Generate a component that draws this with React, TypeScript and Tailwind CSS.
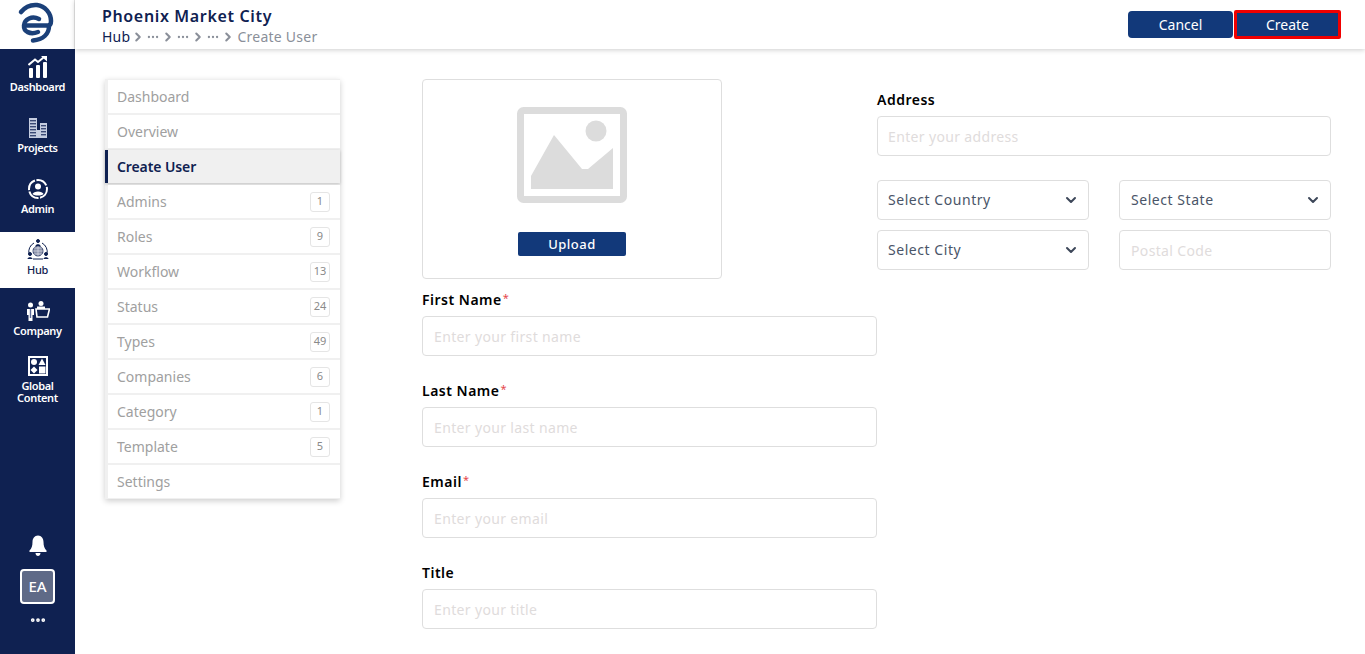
import { ChevronDown, ChevronRight, Ellipsis } from "lucide-react";

const font = "font-['Noto_Sans',sans-serif]";

const menuItems = [
  { label: "Dashboard" },
  { label: "Overview" },
  { label: "Create User", active: true },
  { label: "Admins", count: 1 },
  { label: "Roles", count: 9 },
  { label: "Workflow", count: 13 },
  { label: "Status", count: 24 },
  { label: "Types", count: 49 },
  { label: "Companies", count: 6 },
  { label: "Category", count: 1 },
  { label: "Template", count: 5 },
  { label: "Settings" },
];

function Logo() {
  return (
    <svg width="50" height="48" viewBox="0 0 50 48" fill="none" stroke="#1b4079" strokeWidth="4.5" strokeLinecap="round">
      <path d="M9 11 C13 6 19 3.5 25 4 C33 5 39 12 39 20 C39 23 38 24.5 36 24.5 L14 24.5" />
      <path d="M27 18 C20 14.5 12.5 18 12 24.5 C11.5 30.5 18 34 26 31" />
      <path d="M37 25 C37 33 31 38.5 21 39.5" />
    </svg>
  );
}

function DashboardIcon() {
  return (
    <svg width="20" height="22" viewBox="0 0 20 22" fill="white">
      <rect x="1" y="12" width="4" height="10" rx="1" />
      <rect x="8" y="9" width="4" height="13" rx="1" />
      <rect x="15" y="6" width="4" height="16" rx="1" />
      <path d="M0.5 9 L7 3.5 L10 6 L15.5 1.5" fill="none" stroke="white" strokeWidth="2" />
      <path d="M13 0 H19 V5.5 Z" />
    </svg>
  );
}

function ProjectsIcon() {
  return (
    <svg width="18" height="20" viewBox="0 0 18 20">
      <rect x="0" y="0" width="8" height="20" fill="#c5cde0" />
      <rect x="11" y="5" width="7" height="15" fill="#c5cde0" />
      <rect x="8" y="12" width="3" height="8" fill="#c5cde0" />
      {[2, 5, 8, 11, 14, 17].map((y) => (
        <rect key={y} x="1" y={y} width="6" height="1.4" fill="#3b4a75" />
      ))}
      {[7, 10, 13, 16].map((y) => (
        <rect key={y} x="12" y={y} width="5" height="1.4" fill="#3b4a75" />
      ))}
    </svg>
  );
}

function AdminIcon() {
  return (
    <svg width="22" height="22" viewBox="0 0 22 22" fill="none">
      <circle cx="11" cy="11" r="9" stroke="white" strokeWidth="2" strokeDasharray="12 1.5" />
      <circle cx="11" cy="8.5" r="3" fill="white" />
      <path d="M5.5 16 C6.5 12.5 15.5 12.5 16.5 16 C14 18 8 18 5.5 16 Z" fill="white" />
    </svg>
  );
}

function HubIcon() {
  return (
    <svg width="24" height="22" viewBox="0 0 24 22" fill="none" stroke="#0f2151">
      <circle cx="12" cy="12" r="5" fill="#8d94ab" strokeWidth="0.8" />
      <path d="M7 12 H17 M12 7 V17 M8 9 H16 M8 15 H16" strokeWidth="0.6" stroke="#e8e8f0" />
      <path d="M3 15 A10 10 0 0 1 8 4 M21 15 A10 10 0 0 0 16 4 M7 20 H17" strokeWidth="1" />
      <circle cx="12" cy="2" r="1.5" fill="#0f2151" />
      <path d="M9.5 7 C9.5 4.5 14.5 4.5 14.5 7 Z" fill="#0f2151" stroke="none" />
      <circle cx="4" cy="15" r="1.5" fill="#0f2151" />
      <path d="M1.5 20 C1.5 17.5 6.5 17.5 6.5 20 Z" fill="#0f2151" stroke="none" />
      <circle cx="20" cy="15" r="1.5" fill="#0f2151" />
      <path d="M17.5 20 C17.5 17.5 22.5 17.5 22.5 20 Z" fill="#0f2151" stroke="none" />
    </svg>
  );
}

function CompanyIcon() {
  return (
    <svg width="24" height="20" viewBox="0 0 24 20" fill="none">
      <circle cx="4.5" cy="4" r="2.5" fill="white" />
      <path d="M1 8 H8 V14 H6.5 V20 H2.5 V14 H1 Z" fill="white" />
      <path d="M4.5 8 V17" stroke="#5a6a9a" strokeWidth="1.4" />
      <circle cx="15" cy="2.5" r="2.5" fill="white" />
      <path d="M11 5.5 H19 V8 H11 Z" fill="white" />
      <path d="M10 8 H23.5 L21.5 16 H11 Z" stroke="white" strokeWidth="1.6" />
    </svg>
  );
}

function GlobalContentIcon() {
  return (
    <svg width="20" height="20" viewBox="0 0 20 20">
      <rect x="0" y="0" width="20" height="20" fill="white" />
      <rect x="2" y="2" width="16" height="16" fill="#0f2151" />
      <circle cx="6" cy="6" r="3" fill="white" />
      <path d="M6 10.5 L9.5 14 L6 17.5 L2.5 14 Z" fill="white" />
      <path d="M14 2.5 L17.5 9 H10.5 Z" fill="white" />
      <rect x="11" y="10.5" width="6.5" height="7" fill="white" />
    </svg>
  );
}

function BellIcon() {
  return (
    <svg width="18" height="21" viewBox="0 0 18 21" fill="white">
      <path d="M9 0.5 C12.5 0.5 14.5 3.5 14.5 7 C14.5 11 15.5 13.5 17.5 15.5 V17 H0.5 V15.5 C2.5 13.5 3.5 11 3.5 7 C3.5 3.5 5.5 0.5 9 0.5 Z" />
      <path d="M6.5 18 H11.5 C11.5 20 10.2 21 9 21 C7.8 21 6.5 20 6.5 18 Z" />
    </svg>
  );
}

function PlaceholderImage() {
  return (
    <svg width="110" height="96" viewBox="0 0 110 96">
      <rect x="3.5" y="3.5" width="103" height="89" rx="3" fill="none" stroke="#dcdcdc" strokeWidth="7" />
      <circle cx="79" cy="24" r="10.5" fill="#dcdcdc" />
      <path d="M14 69 L37 28 L65 62 L71 62 L96 41 V82 H14 Z" fill="#dcdcdc" />
    </svg>
  );
}

function NavItem({ label, icon, active }: { label: string; icon: React.ReactNode; active?: boolean }) {
  return (
    <div className={`h-[56px] mb-[5px] flex flex-col items-center justify-center pb-[5px] ${active ? "bg-white text-[#0f2151] font-medium" : "text-white font-semibold"}`}>
      <div className="h-[22px] flex items-center justify-center mb-[3px]">{icon}</div>
      <span className="text-[11px] leading-[12px] tracking-[-0.35px] text-center">{label}</span>
    </div>
  );
}

function Field({ label, placeholder, required }: { label: string; placeholder: string; required?: boolean }) {
  return (
    <div className="mb-[25px]">
      <div className="h-[26px] text-[14px] leading-[20px] font-semibold tracking-[0.5px] text-black">
        {label}
        {required && <span className="ml-[1px] text-[11px] leading-[0] font-normal align-[3px] text-[#e5484d]">*</span>}
      </div>
      <TextInput placeholder={placeholder} />
    </div>
  );
}

function TextInput({ placeholder, tight }: { placeholder: string; tight?: boolean }) {
  return (
    <input
      placeholder={placeholder}
      className={`w-full h-[40px] border border-[#dedede] rounded-[4px] bg-white text-[14px] tracking-[0.35px] outline-none placeholder:text-[#dfdcdc] ${tight ? "px-[10px]" : "px-[11px]"}`}
    />
  );
}

function SelectBox({ label, tight }: { label: string; tight?: boolean }) {
  return (
    <div className={`h-[40px] pr-[9px] flex items-center justify-between border border-[#dedede] rounded-[4px] text-[14px] tracking-[0.55px] text-[#4a5568] ${tight ? "pl-[10px]" : "pl-[11px]"}`}>
      <span className="pb-[2px]">{label}</span>
      <ChevronDown size={16} strokeWidth={3} className="text-[#3d4759]" />
    </div>
  );
}

export default function App() {
  return (
    <div className={`${font} h-screen flex overflow-hidden bg-white`}>
      <aside className="w-[75px] shrink-0 flex flex-col bg-[#0f2151]">
        <div className="h-[49px] flex items-center justify-center bg-white border-r border-[#e5e5e5]">
          <Logo />
        </div>
        <nav className="flex-1">
          <NavItem label="Dashboard" icon={<DashboardIcon />} />
          <NavItem label="Projects" icon={<ProjectsIcon />} />
          <NavItem label="Admin" icon={<AdminIcon />} />
          <NavItem label="Hub" icon={<HubIcon />} active />
          <NavItem label="Company" icon={<CompanyIcon />} />
          <NavItem label="Global Content" icon={<GlobalContentIcon />} />
        </nav>
        <div className="flex flex-col items-center pb-[25px]">
          <BellIcon />
          <div className="mt-[13px] w-[35px] h-[35px] flex items-center justify-center rounded-[4px] border-2 border-white bg-[#5f6a87] text-white text-[15px] font-medium">
            EA
          </div>
          <Ellipsis size={18} strokeWidth={3} className="mt-[7px] text-white" />
        </div>
      </aside>

      <div className="flex-1 min-w-0 flex flex-col">
        <header className="h-[49px] shrink-0 flex items-center justify-between pl-[27px] pr-[24px] shadow-[0_1px_5px_rgba(0,0,0,0.2)]">
          <div className="pt-[2px]">
            <div className="text-[16px] leading-[20px] font-semibold tracking-[0.65px] text-[#0f2151]">Phoenix Market City</div>
            <div className="mt-[2px] flex items-center text-[14px] leading-[18px] tracking-[0.25px] text-[#8a8f99]">
              <span className="text-[#0f2151]">Hub</span>
              {[0, 1, 2].map((i) => (
                <span key={i} className="flex items-center">
                  <ChevronRight size={14} strokeWidth={3.5} className="mx-[1px]" />
                  <Ellipsis size={14} />
                </span>
              ))}
              <ChevronRight size={14} strokeWidth={3.5} className="mx-[1px]" />
              <span className="ml-[1px]">Create User</span>
            </div>
          </div>
          <div className="flex items-center gap-[1px]">
            <button className="w-[105px] h-[27px] rounded-[4px] bg-[#12397a] text-white text-[14px]">Cancel</button>
            <button className="w-[107px] h-[29px] rounded-[2px] border-[3px] border-[#f00000] bg-[#12397a] text-white text-[14px]">Create</button>
          </div>
        </header>

        <main className="flex-1 flex items-start pt-[30px] pl-[30px]">
          <ul className="w-[235px] shrink-0 py-[1px] bg-[#f0f0f0] shadow-[0_2px_6px_rgba(0,0,0,0.2)]">
            {menuItems.map((item, i) => (
              <li
                key={item.label}
                className={`h-[33px] flex items-center justify-between pr-[10px] text-[14px] ${i > 0 ? "mt-[2px]" : ""} ${
                  item.active
                    ? "pl-[9px] border-l-[3px] border-[#0f2151] bg-[#f0f0f0] font-semibold tracking-[-0.1px] text-[#0f2151] shadow-[0_1px_3px_rgba(0,0,0,0.2)]"
                    : "pl-[9px] ml-[3px] bg-white text-[#a0a0a0]"
                }`}
              >
                {item.label}
                {item.count !== undefined && (
                  <span className="min-w-[20px] h-[20px] px-[2px] flex items-center justify-center rounded-[3px] border border-[#e5e5e5] text-[11px] text-[#8a8a8a]">
                    {item.count}
                  </span>
                )}
              </li>
            ))}
          </ul>

          <div className="w-[455px] shrink-0 ml-[82px]">
            <div className="w-[300px] h-[200px] mb-[11px] flex flex-col items-center border border-[#dedede] rounded-[4px] pt-[27px]">
              <PlaceholderImage />
              <button className="mt-[29px] w-[108px] h-[24px] pt-[1px] rounded-[2px] bg-[#12397a] text-white text-[13px] font-medium tracking-[0.5px]">Upload</button>
            </div>
            <Field label="First Name" placeholder="Enter your first name" required />
            <Field label="Last Name" placeholder="Enter your last name" required />
            <Field label="Email" placeholder="Enter your email" required />
            <Field label="Title" placeholder="Enter your title" />
          </div>

          <div className="w-[454px] shrink-0 pt-[11px]">
            <div className="h-[26px] text-[14px] leading-[20px] font-semibold tracking-[0.5px] text-black">Address</div>
            <TextInput placeholder="Enter your address" tight />
            <div className="mt-[24px] grid grid-cols-[212px_212px] justify-between gap-y-[10px]">
              <SelectBox label="Select Country" tight />
              <SelectBox label="Select State" />
              <SelectBox label="Select City" tight />
              <TextInput placeholder="Postal Code" />
            </div>
          </div>
        </main>
      </div>
    </div>
  );
}
